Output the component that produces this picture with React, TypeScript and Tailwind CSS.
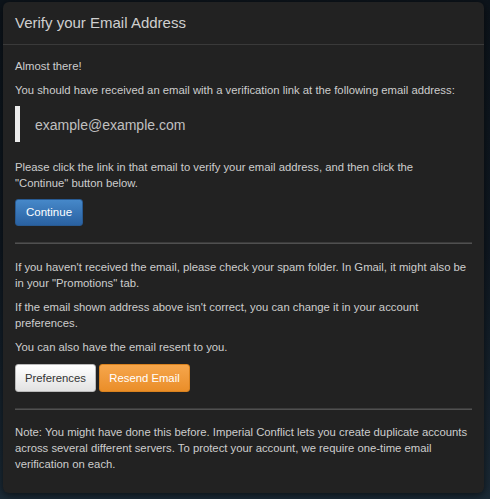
import React from "react";

/** Email verification modal — dark theme, shown over the game screen. */

const textCls = "text-[11.3px] leading-[16px] text-[#cdcdcd]";

function Divider({ bottom }: { bottom: string }) {
  return (
    <div className={`mt-[16px] ${bottom} border-t border-b border-t-[#3b3b3b] border-b-[#505050]`} />
  );
}

export default function App() {
  return (
    <div className="h-[499px] w-[490px] overflow-hidden bg-gradient-to-b from-[#0d141b] via-[#0f1821] to-[#1b2a36] pt-[2px] pl-[3px] font-['Liberation_Sans',Arial,sans-serif]">
      <div className="h-[491px] w-[481px] rounded-[6px] bg-[#222222] shadow-[0_2px_8px_rgba(0,0,0,0.6)]">
        <header className="flex h-[43px] items-center border-b border-[#3a3a3a] px-[12px]">
          <h3 className="text-[15px] text-[#cfcfcf]">Verify your Email Address</h3>
        </header>

        <div className="px-[12px] pt-[13px]">
          <p className={`${textCls} mb-[8px]`}>Almost there!</p>
          <p className={`${textCls} mb-[8px]`}>
            You should have received an email with a verification link at the
            following email address:
          </p>

          <blockquote className="mb-[17px] flex h-[36px] items-center border-l-[5px] border-[#ececec] pl-[15px]">
            <span className="pt-[2px] text-[14px] text-[#c0c0c0]">example@example.com</span>
          </blockquote>

          <p className={`${textCls} mb-[8px]`}>
            Please click the link in that email to verify your email address, and then click the
            <br />
            "Continue" button below.
          </p>

          <button className="h-[27px] rounded-[3px] border border-[#285a92] bg-gradient-to-b from-[#4688c9] to-[#2a62a2] px-[10px] text-[11.5px] text-white">
            Continue
          </button>

          <Divider bottom="mb-[15px]" />

          <p className={`${textCls} mb-[8px]`}>
            If you haven't received the email, please check your spam folder. In Gmail, it might also be
            <br />
            in your "Promotions" tab.
          </p>
          <p className={`${textCls} mb-[8px]`}>
            If the email shown address above isn't correct, you can change it in your account
            <br />
            preferences.
          </p>
          <p className={`${textCls} mb-[9px]`}>You can also have the email resent to you.</p>

          <div className="flex gap-[3px]">
            <button className="h-[28px] w-[81px] rounded-[3px] border border-[#b9b9b9] bg-gradient-to-b from-[#ffffff] to-[#e2e2e2] text-[11.3px] text-[#333333]">
              Preferences
            </button>
            <button className="h-[28px] w-[91px] rounded-[3px] border border-[#d9821f] bg-gradient-to-b from-[#f6a64b] to-[#ea8e28] text-[11.3px] text-white">
              Resend Email
            </button>
          </div>

          <Divider bottom="mb-[14px]" />

          <p className={textCls}>
            Note: You might have done this before. Imperial Conflict lets you create duplicate accounts
            <br />
            across several different servers. To protect your account, we require one-time email
            <br />
            verification on each.
          </p>
        </div>
      </div>
    </div>
  );
}
